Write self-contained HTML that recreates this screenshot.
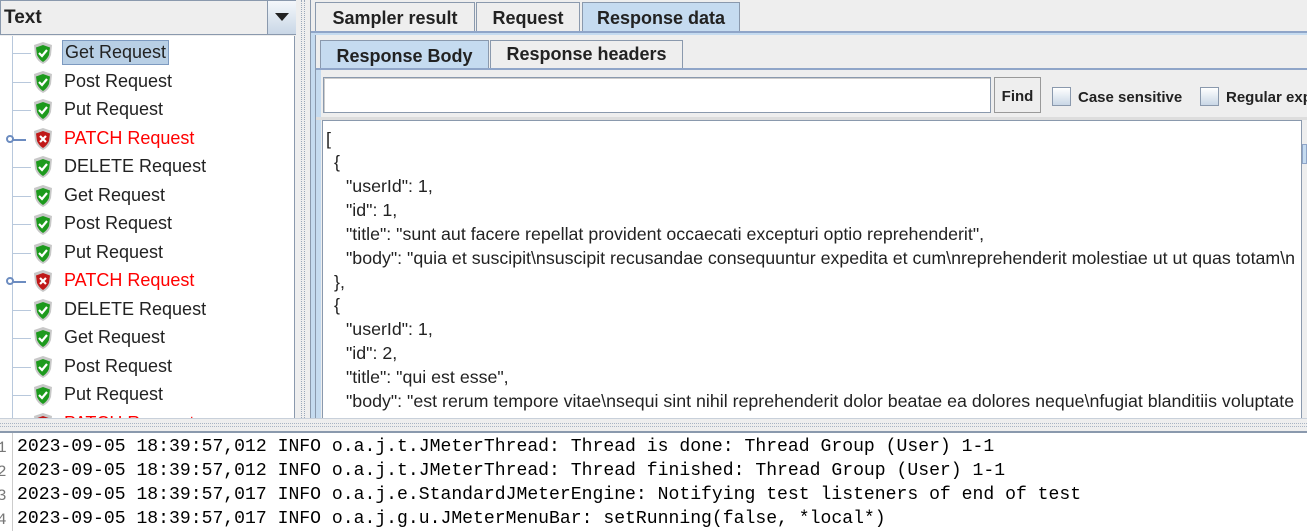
<!DOCTYPE html>
<html><head><meta charset="utf-8"><style>
*{margin:0;padding:0;box-sizing:border-box}
body{width:1307px;height:531px;overflow:hidden;background:#eeeeee;font-family:"Liberation Sans",sans-serif;color:#222;position:relative}
.a{position:absolute}
.row{position:absolute;left:0;height:28px;font-size:18px;white-space:nowrap}
.row span{position:absolute;left:64px;top:4px}
.row svg{position:absolute;left:32px;top:3px}
.hl{position:absolute;left:13px;top:15px;width:18px;border-top:1px solid #b8c8dc}
.tab{position:absolute;font-weight:bold;font-size:18px;border:1px solid #8a99ad;border-bottom:none;background:#eeeeee;text-align:center;line-height:30px}
.j{position:absolute;font-size:17.8px;white-space:pre;color:#222}
.log{position:absolute;left:17px;font-family:"Liberation Mono",monospace;font-size:18.1px;white-space:pre;color:#000}
.ln{position:absolute;left:-3px;font-family:"Liberation Mono",monospace;font-size:16px;color:#777}
</style></head><body>
<svg width="0" height="0" style="position:absolute"><defs>
<g id="ok"><path d="M11 1 L20 4 L19 14 Q17 20 11 23 Q5 20 3 14 L2 4 Z" fill="#c8c8c8"/><path d="M11 4 L18 6.5 L17 14 Q15 18.5 11 21 Q7 18.5 5 14 L4 6.5 Z" fill="#1d9a1d"/><path d="M7 12 L10 15 L15 9" stroke="#fff" stroke-width="2.2" fill="none"/></g>
<g id="bad"><path d="M11 1 L20 4 L19 14 Q17 20 11 23 Q5 20 3 14 L2 4 Z" fill="#c8c8c8"/><path d="M11 4 L18 6.5 L17 14 Q15 18.5 11 21 Q7 18.5 5 14 L4 6.5 Z" fill="#c01818"/><path d="M8 9 L14 15 M14 9 L8 15" stroke="#fff" stroke-width="2.2"/></g>
</defs></svg>

<!-- left panel -->
<div class="a" style="left:0;top:0;width:296px;height:35px;background:#eeeeee;border:1px solid #8a99ad"></div>
<div class="a" style="left:4px;top:7px;font-size:19px;font-weight:bold">Text</div>
<div class="a" style="left:267px;top:1px;width:29px;height:33px;background:linear-gradient(#f4f7fb,#c9d7e6);border-left:1px solid #8a99ad"></div>
<div class="a" style="left:275px;top:13px;width:0;height:0;border-left:7px solid transparent;border-right:7px solid transparent;border-top:8px solid #222"></div>
<div class="a" style="left:0;top:36px;width:295px;height:384px;background:#fff;border-right:1px solid #8a99ad;overflow:hidden">
<div class="a" style="left:12px;top:0;height:384px;border-left:1px solid #b8c8dc"></div>
</div>
<div class="a" style="left:0;top:36px;width:295px;height:382px;overflow:hidden">
<div class="row" style="top:2px;width:295px"><div class="hl"></div><svg width="22" height="24"><use href="#ok"/></svg><span style="left:62px;top:2px;background:#b8cfe5;border:1px solid #7d9ac0;padding:1px 2px">Get Request</span></div>
<div class="row" style="top:31px;width:295px"><div class="hl"></div><svg width="22" height="24"><use href="#ok"/></svg><span>Post Request</span></div>
<div class="row" style="top:59px;width:295px"><div class="hl"></div><svg width="22" height="24"><use href="#ok"/></svg><span>Put Request</span></div>
<div class="row" style="top:88px;width:295px;color:#f00"><div class="hl" style="left:8px;border-top:2px solid #6c8cc0"></div><div class="a" style="left:6px;top:11px;width:8px;height:8px;border:2px solid #6c8cc0;border-radius:50%;background:#fff"></div><svg width="22" height="24"><use href="#bad"/></svg><span>PATCH Request</span></div>
<div class="row" style="top:116px;width:295px"><div class="hl"></div><svg width="22" height="24"><use href="#ok"/></svg><span>DELETE Request</span></div>
<div class="row" style="top:145px;width:295px"><div class="hl"></div><svg width="22" height="24"><use href="#ok"/></svg><span>Get Request</span></div>
<div class="row" style="top:173px;width:295px"><div class="hl"></div><svg width="22" height="24"><use href="#ok"/></svg><span>Post Request</span></div>
<div class="row" style="top:202px;width:295px"><div class="hl"></div><svg width="22" height="24"><use href="#ok"/></svg><span>Put Request</span></div>
<div class="row" style="top:230px;width:295px;color:#f00"><div class="hl" style="left:8px;border-top:2px solid #6c8cc0"></div><div class="a" style="left:6px;top:11px;width:8px;height:8px;border:2px solid #6c8cc0;border-radius:50%;background:#fff"></div><svg width="22" height="24"><use href="#bad"/></svg><span>PATCH Request</span></div>
<div class="row" style="top:259px;width:295px"><div class="hl"></div><svg width="22" height="24"><use href="#ok"/></svg><span>DELETE Request</span></div>
<div class="row" style="top:287px;width:295px"><div class="hl"></div><svg width="22" height="24"><use href="#ok"/></svg><span>Get Request</span></div>
<div class="row" style="top:316px;width:295px"><div class="hl"></div><svg width="22" height="24"><use href="#ok"/></svg><span>Post Request</span></div>
<div class="row" style="top:344px;width:295px"><div class="hl"></div><svg width="22" height="24"><use href="#ok"/></svg><span>Put Request</span></div>
<div class="row" style="top:373px;width:295px;color:#f00"><div class="hl"></div><svg width="22" height="24"><use href="#bad"/></svg><span>PATCH Request</span></div>
</div>

<!-- vertical splitter -->
<div class="a" style="left:301px;top:0;width:4px;height:420px;border-left:1px dotted #9aa8ba;border-right:1px dotted #9aa8ba"></div>
<div class="a" style="left:310px;top:0;width:1px;height:420px;background:#8a99ad"></div>

<!-- top tabs -->
<div class="tab" style="left:315px;top:2px;width:160px;height:30px">Sampler result</div>
<div class="tab" style="left:476px;top:2px;width:104px;height:30px">Request</div>
<div class="tab" style="left:582px;top:2px;width:158px;height:32px;background:#c5dbf0">Response data</div>
<div class="a" style="left:311px;top:31px;width:996px;height:389px;border-top:2px solid #8fa5c8;background:#c5dbf0"></div>
<div class="a" style="left:315px;top:35px;width:992px;height:385px;background:#eeeeee;border-left:1px solid #8a99ad"></div>

<!-- inner tabs -->
<div class="tab" style="left:320px;top:40px;width:169px;height:30px;background:#c5dbf0">Response Body</div>
<div class="tab" style="left:490px;top:40px;width:193px;height:28px;line-height:27px">Response headers</div>
<div class="a" style="left:316px;top:68px;width:991px;height:352px;border-top:2px solid #8fa5c8;background:#eeeeee"></div>
<div class="a" style="left:316px;top:70px;width:5px;height:350px;background:#c5dbf0"></div>

<!-- search row -->
<div class="a" style="left:323px;top:77px;width:668px;height:36px;background:#fff;border:1px solid #8a99ad;box-shadow:inset 1px 1px 0 #ccc"></div>
<div class="a" style="left:994px;top:77px;width:47px;height:36px;border:1px solid #999;background:#eee;font-weight:bold;font-size:15px;line-height:38px;text-align:center">Find</div>
<div class="a" style="left:1052px;top:87px;width:19px;height:19px;border:1px solid #8a99ad;background:linear-gradient(#fff,#c9d7e6)"></div>
<div class="a" style="left:1078px;top:89px;font-weight:bold;font-size:15px">Case sensitive</div>
<div class="a" style="left:1200px;top:87px;width:19px;height:19px;border:1px solid #8a99ad;background:linear-gradient(#fff,#c9d7e6)"></div>
<div class="a" style="left:1226px;top:89px;font-weight:bold;font-size:15px;white-space:nowrap">Regular exp</div>
<div class="a" style="left:316px;top:117px;width:991px;height:3px;background:#ddd"></div>

<!-- text area -->
<div class="a" style="left:322px;top:120px;width:985px;height:298px;background:#fff;border-top:1px solid #8a99ad;border-left:1px solid #8a99ad;overflow:hidden">
<div class="j" style="left:3px;top:8px">[</div>
<div class="j" style="left:11px;top:31px">{</div>
<div class="j" style="left:23px;top:55px">"userId": 1,</div>
<div class="j" style="left:23px;top:79px">"id": 1,</div>
<div class="j" style="left:23px;top:103px">"title": "sunt aut facere repellat provident occaecati excepturi optio reprehenderit",</div>
<div class="j" style="left:23px;top:127px">"body": "quia et suscipit\nsuscipit recusandae consequuntur expedita et cum\nreprehenderit molestiae ut ut quas totam\n</div>
<div class="j" style="left:11px;top:151px">},</div>
<div class="j" style="left:11px;top:174px">{</div>
<div class="j" style="left:23px;top:198px">"userId": 1,</div>
<div class="j" style="left:23px;top:222px">"id": 2,</div>
<div class="j" style="left:23px;top:246px">"title": "qui est esse",</div>
<div class="j" style="left:23px;top:270px">"body": "est rerum tempore vitae\nsequi sint nihil reprehenderit dolor beatae ea dolores neque\nfugiat blanditiis voluptate</div>
</div>
<div class="a" style="left:1301px;top:120px;width:6px;height:298px;background:#eee;border-left:1px solid #8a99ad"></div>
<div class="a" style="left:1302px;top:144px;width:5px;height:20px;background:#c5dbf0;border:1px solid #8fa5c8"></div>

<!-- horizontal splitter -->
<div class="a" style="left:0;top:418px;width:1307px;height:14px;background:#eeeeee;border-top:1px solid #c8d0da"></div>
<div class="a" style="left:0;top:423px;width:1307px;height:4px;border-top:1px dotted #a8b4c4;border-bottom:1px dotted #a8b4c4"></div>
<div class="a" style="left:0;top:431px;width:1307px;height:2px;background:#8a99ad"></div>

<!-- log -->
<div class="a" style="left:0;top:433px;width:1307px;height:98px;background:#fff"></div>
<div class="a" style="left:12px;top:433px;width:1px;height:98px;background:#ccc"></div>
<div class="ln" style="top:439px">1</div><div class="ln" style="top:463px">2</div><div class="ln" style="top:487px">3</div><div class="ln" style="top:511px">4</div>
<div class="log" style="top:437px">2023-09-05 18:39:57,012 INFO o.a.j.t.JMeterThread: Thread is done: Thread Group (User) 1-1</div>
<div class="log" style="top:461px">2023-09-05 18:39:57,012 INFO o.a.j.t.JMeterThread: Thread finished: Thread Group (User) 1-1</div>
<div class="log" style="top:485px">2023-09-05 18:39:57,017 INFO o.a.j.e.StandardJMeterEngine: Notifying test listeners of end of test</div>
<div class="log" style="top:509px">2023-09-05 18:39:57,017 INFO o.a.j.g.u.JMeterMenuBar: setRunning(false, *local*)</div>
</body></html>
